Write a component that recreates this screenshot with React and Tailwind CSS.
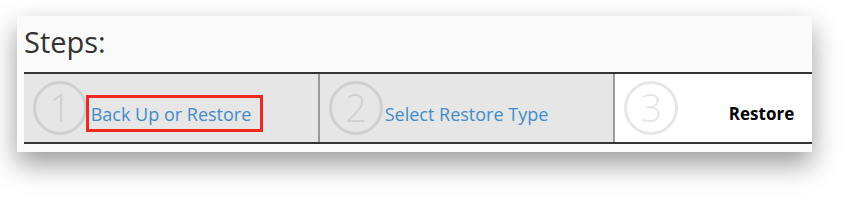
const steps = [
  { n: '1', label: 'Back Up or Restore', link: true, current: false, marked: true },
  { n: '2', label: 'Select Restore Type', link: true, current: false },
  { n: '3', label: 'Restore', link: false, current: true },
];

function StepNumber({ n, onWhite }) {
  const color = onWhite ? '#e6e6e6' : '#d0d0d0';
  return (
    <svg width="56" height="56" viewBox="0 0 56 56" className="absolute left-[8px] top-1/2 -translate-y-1/2">
      <circle cx="28" cy="28" r="25.5" fill="none" stroke={color} strokeWidth="3" />
      <text
        x="28"
        y="41.5"
        textAnchor="middle"
        fontSize="38"
        fontWeight="300"
        fill={color}
        style={{ fontFamily: '"Open Sans", "Liberation Sans", sans-serif' }}
      >
        {n}
      </text>
    </svg>
  );
}

export default function App() {
  return (
    <div className="h-[200px] bg-white pt-[16px] pl-[17px] font-['Open_Sans','Liberation_Sans',sans-serif]">
      <div className="w-[795px] h-[136px] overflow-hidden bg-[#fafafa] shadow-[0_12px_26px_rgba(0,0,0,0.4)]">
        <h2 className="h-[56px] pl-[7px] pt-[6px] text-[29px] leading-[39px] text-[#333]">Steps:</h2>
        <div className="ml-[7px] flex w-[885px] border-y-2 border-[#333]">
          {steps.map((s, i) => (
            <div
              key={s.n}
              className={`relative flex h-[68px] items-center justify-center pt-[11px] ${
                i === 0 ? 'w-[294px]' : 'w-[295px] border-l-2 border-[#999]'
              } ${s.current ? 'bg-white' : 'bg-[#e6e6e6]'}`}
            >
              <StepNumber n={s.n} onWhite={s.current} />
              {s.link ? (
                <span className="relative text-[18px] leading-[24px] text-[#428bca]">
                  {s.label}
                  {s.marked && (
                    <span className="absolute -left-[5px] -right-[12px] -top-[7px] -bottom-[6px] border-[3px] border-[#ee2a1e]" />
                  )}
                </span>
              ) : (
                <span className="text-[17px] font-bold leading-[24px] text-black">{s.label}</span>
              )}
            </div>
          ))}
        </div>
      </div>
    </div>
  );
}
